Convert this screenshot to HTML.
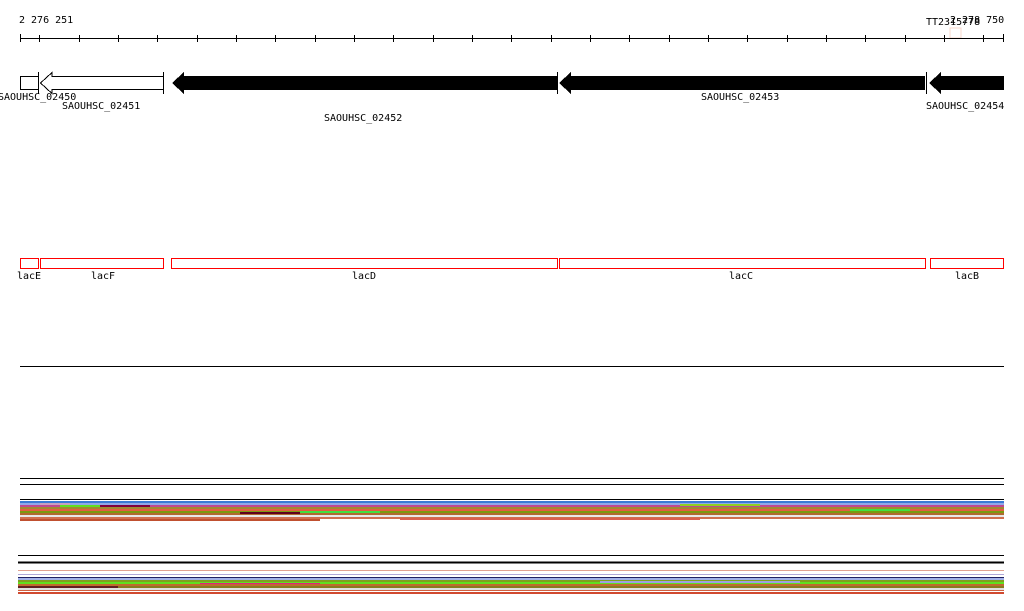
<!DOCTYPE html>
<html><head><meta charset="utf-8"><style>
html,body{margin:0;padding:0;background:#fff;width:1024px;height:611px;overflow:hidden}
text{font-family:"DejaVu Sans Mono","Liberation Mono",monospace;font-size:10px;fill:#000}
</style></head><body>
<svg width="1024" height="611" viewBox="0 0 1024 611" shape-rendering="crispEdges">
<text x="19" y="23">2 276 251</text>
<text x="926" y="25">TT2315778</text>
<text x="950" y="23">2 278 750</text>
<rect x="950" y="28" width="11" height="10" fill="none" stroke="#f8d8cc"/>
<line x1="20" y1="38.5" x2="1004" y2="38.5" stroke="#000"/>
<g stroke="#000">
<line x1="20.5" y1="34" x2="20.5" y2="42"/><line x1="1003.5" y1="34" x2="1003.5" y2="42"/>
<line x1="39.5" y1="35" x2="39.5" y2="42"/><line x1="79.5" y1="35" x2="79.5" y2="42"/><line x1="118.5" y1="35" x2="118.5" y2="42"/><line x1="157.5" y1="35" x2="157.5" y2="42"/><line x1="197.5" y1="35" x2="197.5" y2="42"/><line x1="236.5" y1="35" x2="236.5" y2="42"/><line x1="275.5" y1="35" x2="275.5" y2="42"/><line x1="315.5" y1="35" x2="315.5" y2="42"/><line x1="354.5" y1="35" x2="354.5" y2="42"/><line x1="393.5" y1="35" x2="393.5" y2="42"/><line x1="433.5" y1="35" x2="433.5" y2="42"/><line x1="472.5" y1="35" x2="472.5" y2="42"/><line x1="511.5" y1="35" x2="511.5" y2="42"/><line x1="551.5" y1="35" x2="551.5" y2="42"/><line x1="590.5" y1="35" x2="590.5" y2="42"/><line x1="629.5" y1="35" x2="629.5" y2="42"/><line x1="669.5" y1="35" x2="669.5" y2="42"/><line x1="708.5" y1="35" x2="708.5" y2="42"/><line x1="747.5" y1="35" x2="747.5" y2="42"/><line x1="787.5" y1="35" x2="787.5" y2="42"/><line x1="826.5" y1="35" x2="826.5" y2="42"/><line x1="865.5" y1="35" x2="865.5" y2="42"/><line x1="905.5" y1="35" x2="905.5" y2="42"/><line x1="944.5" y1="35" x2="944.5" y2="42"/><line x1="983.5" y1="35" x2="983.5" y2="42"/>
</g>
<rect x="20.5" y="76.5" width="18" height="13" fill="#fff" stroke="#000"/>
<line x1="38.5" y1="72" x2="38.5" y2="94" stroke="#000"/>
<polygon points="40.5,83 52,72.5 52,76.5 163.5,76.5 163.5,89.5 52,89.5 52,93.5" fill="#fff" stroke="#000"/>
<line x1="163.5" y1="72" x2="163.5" y2="94" stroke="#000"/>
<polygon points="172,83 184,72 184,76 557,76 557,90 184,90 184,94" fill="#000"/>
<line x1="557.5" y1="72" x2="557.5" y2="94" stroke="#000"/>
<polygon points="559,83 571,72 571,76 925,76 925,90 571,90 571,94" fill="#000"/>
<line x1="926.5" y1="72" x2="926.5" y2="94" stroke="#000"/>
<polygon points="929,83 941,72 941,76 1004,76 1004,90 941,90 941,94" fill="#000"/>
<text x="-2" y="100">SAOUHSC_02450</text>
<text x="62" y="109">SAOUHSC_02451</text>
<text x="324" y="121">SAOUHSC_02452</text>
<text x="701" y="100">SAOUHSC_02453</text>
<text x="926" y="109">SAOUHSC_02454</text>
<g fill="none" stroke="#f00">
<rect x="20.5" y="258.5" width="18" height="10"/>
<rect x="40.5" y="258.5" width="123" height="10"/>
<rect x="171.5" y="258.5" width="386" height="10"/>
<rect x="559.5" y="258.5" width="366" height="10"/>
<rect x="930.5" y="258.5" width="73" height="10"/>
</g>
<text x="17" y="279">lacE</text>
<text x="91" y="279">lacF</text>
<text x="352" y="279">lacD</text>
<text x="729" y="279">lacC</text>
<text x="955" y="279">lacB</text>
<g stroke="#000">
<line x1="20" y1="366.5" x2="1004" y2="366.5"/>
<line x1="20" y1="478.5" x2="1004" y2="478.5"/>
<line x1="20" y1="484.5" x2="1004" y2="484.5"/>
<line x1="20" y1="499.5" x2="1004" y2="499.5"/>
<line x1="18" y1="555.5" x2="1004" y2="555.5"/>
<line x1="18" y1="562.5" x2="1004" y2="562.5" stroke-width="2"/>
</g>
<rect x="20" y="501" width="984" height="2" fill="#3a7bd5"/>
<rect x="20" y="503" width="984" height="2" fill="#90a8e8"/>
<rect x="20" y="505" width="984" height="2" fill="#c04890"/>
<rect x="20" y="507" width="984" height="2" fill="#a08a30"/>
<rect x="20" y="509" width="984" height="2" fill="#e06040"/>
<rect x="20" y="511" width="984" height="2" fill="#7a9a10"/>
<rect x="20" y="513" width="984" height="2" fill="#b06a30"/>
<rect x="20" y="515" width="984" height="2" fill="#e8e8e8"/>
<rect x="20" y="517" width="984" height="2" fill="#d07050"/>
<rect x="60" y="505" width="40" height="2" fill="#60e020"/>
<rect x="40" y="503" width="30" height="2" fill="#c8a0c0"/>
<rect x="100" y="505" width="50" height="2" fill="#800040"/>
<rect x="300" y="511" width="80" height="2" fill="#40e040"/>
<rect x="240" y="512" width="60" height="2" fill="#600020"/>
<rect x="680" y="504" width="80" height="2" fill="#90d020"/>
<rect x="850" y="509" width="60" height="2" fill="#40e040"/>
<rect x="20" y="519" width="300" height="2" fill="#c05030"/>
<rect x="400" y="518" width="300" height="2" fill="#d86050"/>
<rect x="18" y="570" width="986" height="1" fill="#e0a090"/>
<rect x="18" y="574" width="986" height="1" fill="#b0a8d8"/>
<rect x="18" y="577" width="986" height="1" fill="#202060"/>
<rect x="18" y="578" width="986" height="2" fill="#a0b0e8"/>
<rect x="18" y="580" width="986" height="2" fill="#80a020"/>
<rect x="18" y="582" width="986" height="2" fill="#60e020"/>
<rect x="18" y="584" width="986" height="2" fill="#c06a30"/>
<rect x="18" y="586" width="986" height="2" fill="#8a7a20"/>
<rect x="18" y="588" width="986" height="2" fill="#e0e0e0"/>
<rect x="18" y="590" width="986" height="1" fill="#d06040"/>
<rect x="18" y="592" width="986" height="2" fill="#d04a30"/>
<rect x="200" y="583" width="120" height="1" fill="#e02080"/>
<rect x="600" y="581" width="200" height="2" fill="#a0a0e0"/>
<rect x="18" y="586" width="100" height="2" fill="#602020"/>
</svg>
</body></html>
